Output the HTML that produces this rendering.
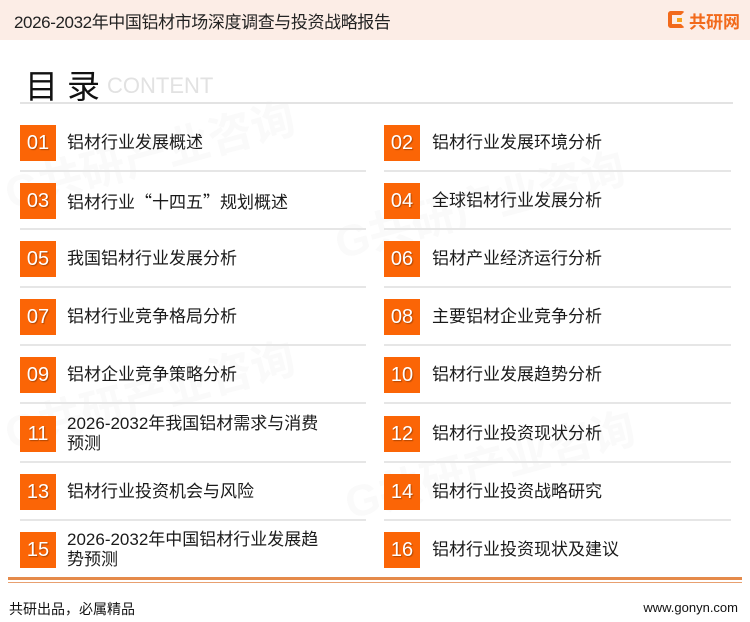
<!DOCTYPE html>
<html><head><meta charset="utf-8"><style>
*{margin:0;padding:0;box-sizing:border-box}
body{width:750px;height:622px;background:#fff;position:relative;overflow:hidden;font-family:"Liberation Sans","Noto Sans CJK SC",sans-serif;color:#1a1a1a}
.hdr{position:absolute;left:0;top:0;width:750px;height:40px;background:#fcede6}
.ttl{position:absolute;left:14px;top:8px;font-size:17px;color:#222;letter-spacing:-0.4px}
.logo{position:absolute;left:668px;top:10px;width:76px;height:20px}
.logo .g{position:absolute;left:0;top:1px;width:17px;height:17px;border:4px solid #f26a1b;border-right-color:transparent;border-radius:3px}
.logo .g:after{content:"";position:absolute;left:5px;top:3px;width:5px;height:4px;background:#f7a21b}
.logo span{position:absolute;left:21px;top:-2px;font-size:17px;font-weight:bold;color:#f26a1b}
.ml{position:absolute;left:25px;top:60px;font-size:33px;color:#111;letter-spacing:9px}
.ct{position:absolute;left:107px;top:73px;font-size:22px;color:#e2e2e2}
.sep{position:absolute;left:20px;top:102px;width:713px;height:2px;background:#e3e3e3}
.b{position:absolute;width:36px;height:36px;background:#fb6506;color:#fff;font-size:20px;text-align:center;line-height:36px;text-shadow:1px 1px 1px rgba(0,0,0,.3)}
.t{position:absolute;font-size:17px;line-height:20px;color:#1a1a1a}
.q{font-family:"Noto Sans CJK SC",sans-serif}
.l{position:absolute;height:2px;background:#e6e6e6}
.f1{position:absolute;left:8px;top:577px;width:734px;height:3px;background:#e58a4a}
.f2{position:absolute;left:8px;top:582px;width:734px;height:1px;background:#e8a070}
.fl{position:absolute;left:9px;top:599px;font-size:14px;color:#111}
.fr{position:absolute;right:12px;top:600px;font-size:13px;color:#111}
.wm{position:absolute;font-size:44px;font-weight:bold;color:#fafafa;transform:rotate(-15deg);white-space:nowrap}
</style></head><body>
<div class="wm" style="left:0;top:120px">G共研产业咨询</div>
<div class="wm" style="left:330px;top:170px">G共研产业咨询</div>
<div class="wm" style="left:0;top:360px">G共研产业咨询</div>
<div class="wm" style="left:340px;top:430px">G共研产业咨询</div>
<div class="hdr"></div>
<div class="ttl">2026-2032年中国铝材市场深度调查与投资战略报告</div>
<div class="logo"><div class="g"></div><span>共研网</span></div>
<div class="ml">目录</div>
<div class="ct">CONTENT</div>
<div class="sep"></div>

<div class="b" style="left:20px;top:125px">01</div><div class="t" style="left:67px;top:133px">铝材行业发展概述</div>
<div class="b" style="left:384px;top:125px">02</div><div class="t" style="left:432px;top:133px">铝材行业发展环境分析</div>
<div class="l" style="left:20px;width:346px;top:170px"></div><div class="l" style="left:384px;width:347px;top:170px"></div>

<div class="b" style="left:20px;top:183px">03</div><div class="t" style="left:67px;top:191px">铝材行业<span class="q">“十四五”</span>规划概述</div>
<div class="b" style="left:384px;top:183px">04</div><div class="t" style="left:432px;top:191px">全球铝材行业发展分析</div>
<div class="l" style="left:20px;width:346px;top:228px"></div><div class="l" style="left:384px;width:347px;top:228px"></div>

<div class="b" style="left:20px;top:241px">05</div><div class="t" style="left:67px;top:249px">我国铝材行业发展分析</div>
<div class="b" style="left:384px;top:241px">06</div><div class="t" style="left:432px;top:249px">铝材产业经济运行分析</div>
<div class="l" style="left:20px;width:346px;top:286px"></div><div class="l" style="left:384px;width:347px;top:286px"></div>

<div class="b" style="left:20px;top:299px">07</div><div class="t" style="left:67px;top:307px">铝材行业竞争格局分析</div>
<div class="b" style="left:384px;top:299px">08</div><div class="t" style="left:432px;top:307px">主要铝材企业竞争分析</div>
<div class="l" style="left:20px;width:346px;top:344px"></div><div class="l" style="left:384px;width:347px;top:344px"></div>

<div class="b" style="left:20px;top:357px">09</div><div class="t" style="left:67px;top:365px">铝材企业竞争策略分析</div>
<div class="b" style="left:384px;top:357px">10</div><div class="t" style="left:432px;top:365px">铝材行业发展趋势分析</div>
<div class="l" style="left:20px;width:346px;top:402px"></div><div class="l" style="left:384px;width:347px;top:402px"></div>

<div class="b" style="left:20px;top:416px">11</div><div class="t" style="left:67px;top:414px">2026-2032年我国铝材需求与消费<br>预测</div>
<div class="b" style="left:384px;top:416px">12</div><div class="t" style="left:432px;top:424px">铝材行业投资现状分析</div>
<div class="l" style="left:20px;width:346px;top:461px"></div><div class="l" style="left:384px;width:347px;top:461px"></div>

<div class="b" style="left:20px;top:474px">13</div><div class="t" style="left:67px;top:482px">铝材行业投资机会与风险</div>
<div class="b" style="left:384px;top:474px">14</div><div class="t" style="left:432px;top:482px">铝材行业投资战略研究</div>
<div class="l" style="left:20px;width:346px;top:519px"></div><div class="l" style="left:384px;width:347px;top:519px"></div>

<div class="b" style="left:20px;top:532px">15</div><div class="t" style="left:67px;top:530px">2026-2032年中国铝材行业发展趋<br>势预测</div>
<div class="b" style="left:384px;top:532px">16</div><div class="t" style="left:432px;top:540px">铝材行业投资现状及建议</div>

<div class="f1"></div><div class="f2"></div>
<div class="fl">共研出品，必属精品</div>
<div class="fr">www.gonyn.com</div>
</body></html>
